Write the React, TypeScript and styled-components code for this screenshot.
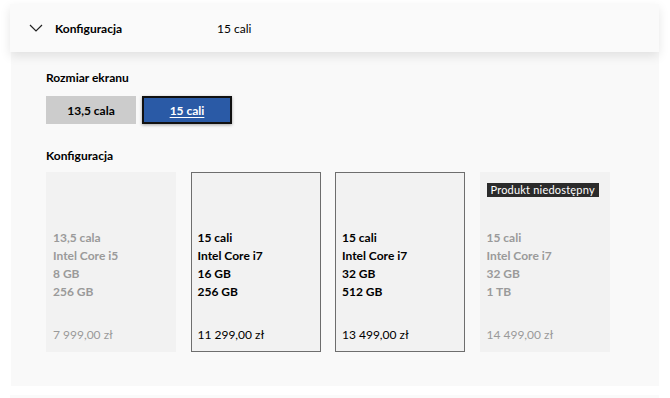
import React from "react";
import styled, { createGlobalStyle } from "styled-components";

const GlobalStyle = createGlobalStyle`
  body {
    margin: 0;
    background: #ffffff;
    font-family: Lato, "Noto Sans", sans-serif;
    color: #000;
  }
`;

type Config = {
  size: string;
  cpu: string;
  ram: string;
  disk: string;
  price: string;
  available: boolean;
};

const configs: Config[] = [
  { size: "13,5 cala", cpu: "Intel Core i5", ram: "8 GB", disk: "256 GB", price: "7 999,00 zł", available: false },
  { size: "15 cali", cpu: "Intel Core i7", ram: "16 GB", disk: "256 GB", price: "11 299,00 zł", available: true },
  { size: "15 cali", cpu: "Intel Core i7", ram: "32 GB", disk: "512 GB", price: "13 499,00 zł", available: true },
  { size: "15 cali", cpu: "Intel Core i7", ram: "32 GB", disk: "1 TB", price: "14 499,00 zł", available: false },
];

export default function App() {
  return (
    <>
      <GlobalStyle />
      <Page>
        <Section>
          <Header>
            <Chevron width="14" height="8" viewBox="0 0 14 8">
              <path d="M1 1l6 6 6-6" fill="none" stroke="#222" strokeWidth="1.2" />
            </Chevron>
            <HeaderTitle>Konfiguracja</HeaderTitle>
            <HeaderValue>15 cali</HeaderValue>
          </Header>
          <Panel>
            <Label>Rozmiar ekranu</Label>
            <ButtonRow>
              <SizeButton>13,5 cala</SizeButton>
              <SizeButton $active>15 cali</SizeButton>
            </ButtonRow>
            <Label $spaced>Konfiguracja</Label>
            <CardRow>
              {configs.map((c, i) => (
                <Card key={i} $available={c.available}>
                  <BadgeSlot>
                    {i === 3 && <Badge>Produkt niedostępny</Badge>}
                  </BadgeSlot>
                  <Specs>
                    <div>{c.size}</div>
                    <div>{c.cpu}</div>
                    <div>{c.ram}</div>
                    <div>{c.disk}</div>
                  </Specs>
                  <Price>{c.price}</Price>
                </Card>
              ))}
            </CardRow>
          </Panel>
        </Section>
        <NextSection />
      </Page>
    </>
  );
}

const Page = styled.div`
  padding: 4px 11px 0 10px;
`;

const Section = styled.div`
  display: flex;
  flex-direction: column;
`;

const Header = styled.div`
  position: relative;
  z-index: 1;
  display: flex;
  align-items: center;
  height: 48px;
  background: #fafafa;
  box-shadow: 0 4px 10px rgba(0, 0, 0, 0.1);
  font-size: 12px;
`;

const Chevron = styled.svg`
  margin: 0 0 0 19px;
`;

const HeaderTitle = styled.span`
  font-weight: 700;
  margin-left: 12px;
  width: 162px;
`;

const HeaderValue = styled.span`
  font-weight: 400;
`;

const Panel = styled.div`
  background: #f9f9f9;
  margin-left: 1px;
  padding: 18px 0 34px 35px;
`;

const Label = styled.div<{ $spaced?: boolean }>`
  font-size: 12px;
  font-weight: 700;
  line-height: 16px;
  margin-top: ${({ $spaced }) => ($spaced ? "24px" : "0")};
`;

const ButtonRow = styled.div`
  display: flex;
  gap: 6px;
  margin-top: 10px;
`;

const SizeButton = styled.button<{ $active?: boolean }>`
  width: 90px;
  height: 28px;
  font-family: inherit;
  font-size: 12px;
  font-weight: 700;
  cursor: pointer;
  background: ${({ $active }) => ($active ? "#2a5aa6" : "#cccccc")};
  color: ${({ $active }) => ($active ? "#ffffff" : "#000000")};
  border: ${({ $active }) => ($active ? "2px solid #111" : "none")};
  box-shadow: ${({ $active }) => ($active ? "0 1px 3px rgba(0,0,0,0.35)" : "none")};
  text-decoration: ${({ $active }) => ($active ? "underline" : "none")};
  text-underline-offset: 2px;
  padding: 0;
`;

const CardRow = styled.div`
  display: flex;
  gap: 14.5px;
  margin-top: 8px;
`;

const Card = styled.div<{ $available: boolean }>`
  box-sizing: border-box;
  width: 130px;
  height: 180px;
  display: flex;
  flex-direction: column;
  padding: 0 6px 7px;
  background: #f2f2f2;
  border: 1px solid ${({ $available }) => ($available ? "#6e6e6e" : "transparent")};
  color: ${({ $available }) => ($available ? "#000000" : "#9a9a9a")};
  font-size: 12px;
`;

const BadgeSlot = styled.div`
  height: 56px;
  padding-top: 9px;
  box-sizing: border-box;
`;

const Badge = styled.span`
  display: inline-block;
  white-space: nowrap;
  background: #2b2b2b;
  color: #ffffff;
  font-size: 11px;
  line-height: 14px;
  letter-spacing: 0.2px;
  padding: 0 4px;
`;

const Specs = styled.div`
  font-weight: 700;
  line-height: 18px;
`;

const Price = styled.div`
  margin-top: auto;
  line-height: 18px;
`;

const NextSection = styled.div`
  height: 3px;
  margin-top: 9px;
  background: #fafafa;
`;
